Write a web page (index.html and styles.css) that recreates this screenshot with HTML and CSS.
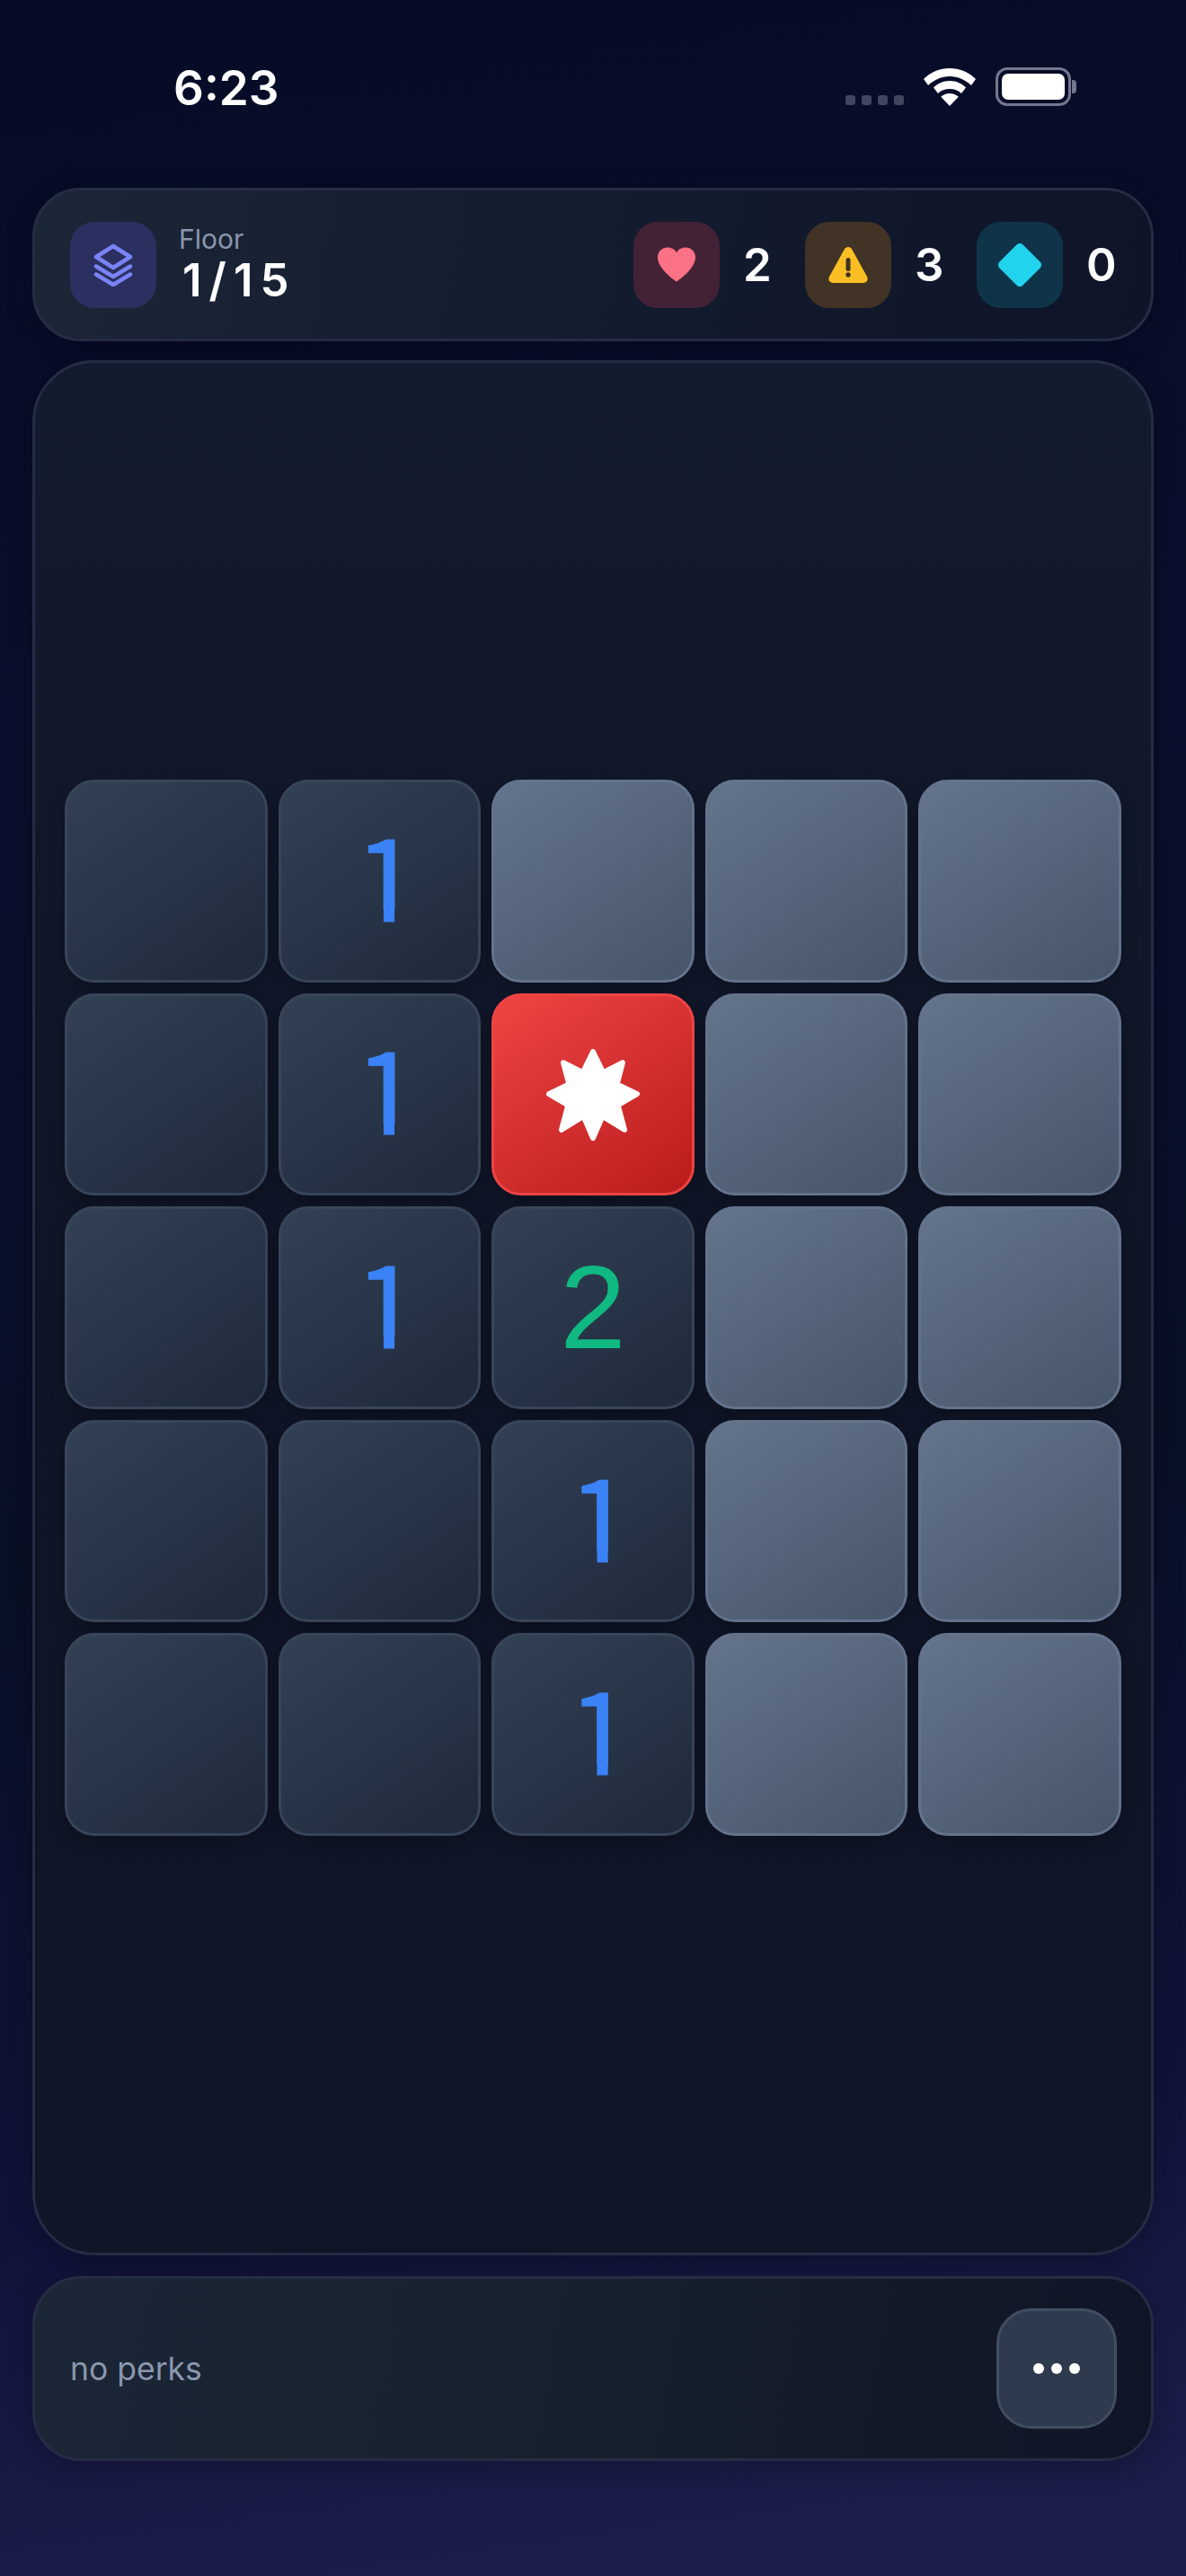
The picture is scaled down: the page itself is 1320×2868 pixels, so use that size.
FILE: index.html
```html
<!DOCTYPE html>
<html lang="en">
<head>
<meta charset="utf-8">
<title>Floor 1/15</title>
<link rel="stylesheet" href="styles.css">
</head>
<body>
<div class="screen">
  <header class="status">
    <span class="time">6:23</span>
    <div class="status-icons">
      <div class="signal"><i></i><i></i><i></i><i></i></div>
      <svg class="wifi" width="58" height="42" viewBox="0 0 58 42"><path fill="#fff" d="M29 0C18 0 8 4 0 12l5 7c6.500-6 15-10 24-10s17.500 4 24 10l5-7C50 4 40 0 29 0z"/><path fill="#fff" d="M29 14c-7 0-13 2.700-18 7.500l5 6.500c3.400-3.200 8-5 13-5s9.600 1.800 13 5l5-6.500C42 16.700 36 14 29 14z"/><path fill="#fff" d="M29 28c-3.800 0-7 1.300-9.800 3.800L29 42l9.800-10.200C36 29.300 32.800 28 29 28z"/></svg>
      <div class="battery"><div class="battery-body"><div class="battery-fill"></div></div><div class="battery-cap"></div></div>
    </div>
  </header>

  <section class="panel topbar">
    <div class="floor">
      <div class="tile tile-floor">
        <svg width="44" height="48" viewBox="0 0 44 48" fill="none" stroke="#7a83f6" stroke-width="4.500" stroke-linecap="round" stroke-linejoin="round"><path d="M22 3 41 15 22 27 3 15z"/><path d="M3 25.500 22 37 41 25.500"/><path d="M3 34.500 22 46 41 34.500"/></svg>
      </div>
      <div class="floor-text">
        <span class="floor-label">Floor</span>
        <span class="floor-value">1/15</span>
      </div>
    </div>
    <div class="stats">
      <div class="stat">
        <div class="tile tile-heart">
          <svg width="42" height="39" viewBox="0 0 44 40"><path fill="#fb7185" d="M22 40C19.500 38 0 25 0 11.500 0 4.500 5.500 0 11.500 0 16 0 20 2.300 22 6 24 2.300 28 0 32.500 0 38.500 0 44 4.500 44 11.500 44 25 24.500 38 22 40z"/></svg>
        </div>
        <span class="stat-value">2</span>
      </div>
      <div class="stat">
        <div class="tile tile-warn">
          <svg width="44" height="40" viewBox="0 0 44 40"><path fill="#fbbf24" d="M17.500 3C19.500-1 24.500-1 26.500 3L43 33C44.800 36.500 42.800 40 39 40H5C1.200 40-.8 36.500 1 33z"/><rect x="19.500" y="12" width="5" height="15" rx="2.500" fill="#3f3326"/><circle cx="22" cy="31" r="2.700" fill="#3f3326"/></svg>
        </div>
        <span class="stat-value">3</span>
      </div>
      <div class="stat">
        <div class="tile tile-gem">
          <svg width="48" height="48" viewBox="0 0 48 48"><path fill="#22d3ee" d="M20.500 1.500C22.500-.5 25.500-.5 27.500 1.500L46.500 20.500C48.500 22.500 48.500 25.500 46.500 27.500L27.500 46.500C25.500 48.500 22.500 48.500 20.500 46.500L1.500 27.500C-.5 25.500-.5 22.500 1.500 20.500z"/></svg>
        </div>
        <span class="stat-value">0</span>
      </div>
    </div>
  </section>

  <main class="panel board">
    <div class="grid">
      <div class="cell open"></div>
      <div class="cell open"><span class="one">1</span></div>
      <div class="cell closed"></div>
      <div class="cell closed"></div>
      <div class="cell closed"></div>

      <div class="cell open"></div>
      <div class="cell open"><span class="one">1</span></div>
      <div class="cell mine">
        <svg width="110" height="110" viewBox="45 45 110 110"><polygon fill="#fff" stroke="#fff" stroke-width="6" stroke-linejoin="round" points="100,53 111.400,76.200 132.900,65.200 126.600,89.300 149,100 127.700,112.500 135,139.800 110.600,124.700 100,149 89.400,124.700 65,139.800 72.300,112.500 51,100 73.400,89.300 67.100,65.200 88.600,76.200"/></svg>
      </div>
      <div class="cell closed"></div>
      <div class="cell closed"></div>

      <div class="cell open"></div>
      <div class="cell open"><span class="one">1</span></div>
      <div class="cell open n2">2</div>
      <div class="cell closed"></div>
      <div class="cell closed"></div>

      <div class="cell open"></div>
      <div class="cell open"></div>
      <div class="cell open"><span class="one">1</span></div>
      <div class="cell closed"></div>
      <div class="cell closed"></div>

      <div class="cell open"></div>
      <div class="cell open"></div>
      <div class="cell open"><span class="one">1</span></div>
      <div class="cell closed"></div>
      <div class="cell closed"></div>
    </div>
  </main>

  <footer class="panel perks">
    <span class="perks-text">no perks</span>
    <button class="more" type="button"><i></i><i></i><i></i></button>
  </footer>
</div>
</body>
</html>
```
FILE: styles.css
```css
* { box-sizing: border-box; }
html, body { margin: 0; padding: 0; }
body {
  width: 1320px;
  height: 2868px;
  overflow: hidden;
  font-family: Inter, "Liberation Sans", sans-serif;
  color: #fff;
  background: linear-gradient(172deg, #060b26 0%, #0a0f2d 30%, #081026 58%, #10133a 82%, #191b47 92%, #1c1e4c 100%);
}
.screen {
  display: flex;
  flex-direction: column;
  height: 2868px;
  padding: 0 36px;
}
.status {
  height: 209px;
  flex: none;
  display: flex;
  justify-content: space-between;
  align-items: flex-start;
  padding: 68px 86px 0 157px;
}
.time {
  font-size: 53px;
  line-height: 60px;
  font-weight: 600;
}
.status-icons {
  display: flex;
  align-items: flex-end;
  margin-top: 7px;
  gap: 22px;
}
.signal { display: flex; gap: 7px; padding-bottom: 1px; }
.signal i { width: 11px; height: 11px; border-radius: 3px; background: #41455f; }
.wifi { display: block; }
.battery { display: flex; align-items: center; gap: 1px; }
.battery-body {
  width: 84px;
  height: 43px;
  border: 3px solid #73768c;
  border-radius: 13px;
  padding: 4px;
}
.battery-fill { width: 100%; height: 100%; background: #fff; border-radius: 7px; }
.battery-cap { width: 5px; height: 15px; background: #73768c; border-radius: 0 4px 4px 0; }

.panel {
  border: 3px solid #242d44;
  flex: none;
  box-shadow: 0 6px 30px rgba(0, 0, 0, .28);
}
.topbar {
  height: 171px;
  border-radius: 54px;
  padding: 0 38px 0 39px;
  display: flex;
  align-items: center;
  justify-content: space-between;
  background: linear-gradient(100deg, #1b2636 0%, #121a2d 60%, #0f1428 100%);
}
.floor { display: flex; align-items: center; gap: 25px; }
.tile {
  width: 96px;
  height: 96px;
  border-radius: 27px;
  display: flex;
  align-items: center;
  justify-content: center;
  flex: none;
}
.tile-floor { background: #2b3060; }
.tile-heart { background: #432236; }
.tile-warn { background: #413325; }
.tile-gem { background: #0f3449; }
.floor-text { display: flex; flex-direction: column; }
.floor-label { font-size: 30px; line-height: 36px; color: #8a97ad; margin-top: -2px; }
.floor-value { font-size: 51px; line-height: 56px; font-weight: 600; letter-spacing: 8px; margin-left: 4px; }
.stats { display: flex; gap: 35px; }
.stat { display: flex; align-items: center; gap: 26px; }
.stat-value { font-size: 51px; line-height: 56px; font-weight: 600; width: 34px; }

.board {
  margin-top: 21px;
  height: 2110px;
  border-radius: 69px;
  padding: 0 33px;
  display: flex;
  align-items: center;
  background: linear-gradient(180deg, #131b2e 0%, #0f1526 50%, #101528 100%);
}
.grid {
  width: 100%;
  display: grid;
  grid-template-columns: repeat(5, 1fr);
  gap: 12px;
}
.cell {
  aspect-ratio: 1;
  border-radius: 33px;
  border: 3px solid transparent;
  display: flex;
  align-items: center;
  justify-content: center;
  font-family: "Liberation Sans", Arial, sans-serif;
  font-size: 132px;
  line-height: 1;
  box-shadow: 0 6px 18px rgba(0, 0, 0, .25);
}
.open {
  background: linear-gradient(145deg, #334155 0%, #1e293b 100%);
  border-color: #384559;
}
.closed {
  background: linear-gradient(145deg, #64748b 0%, #475569 100%);
  border-color: #64738c;
}
.mine {
  background: linear-gradient(145deg, #ef4444 0%, #b91c1c 100%);
  border-color: #ef4444;
}
.mine svg { display: block; }
.n2 { color: #10b981; }
.one {
  display: block;
  color: #3b82f6;
  font-family: "Noto Sans CJK SC", sans-serif;
  font-size: 128px;
  line-height: 1;
  -webkit-text-stroke: 1.2px #3b82f6;
  transform: translate(8px, -10px);
  clip-path: polygon(0 0, 100% 0, 100% .83em, .345em .83em, .345em 120%, .25em 120%, .25em .83em, 0 .83em);
}

.perks {
  margin-top: 23px;
  height: 206px;
  border-radius: 54px;
  padding: 0 39px;
  display: flex;
  align-items: center;
  justify-content: space-between;
  background: linear-gradient(100deg, #1b2636 0%, #17212f 45%, #0f1526 100%);
}
.perks-text { font-size: 35.500px; color: #8a97ad; font-weight: 400; }
.more {
  width: 134px;
  height: 134px;
  border-radius: 39px;
  border: 3px solid #414d60;
  background: #2e3a4d;
  display: flex;
  align-items: center;
  justify-content: center;
  gap: 8px;
  padding: 0;
  margin-right: -1px;
}
.more i { width: 12px; height: 12px; border-radius: 50%; background: #fff; }
```
